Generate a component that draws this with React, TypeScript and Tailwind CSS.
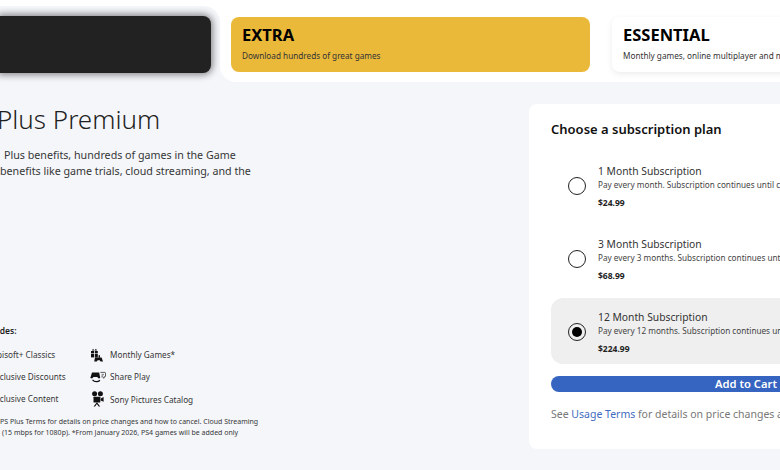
const font = { fontFamily: '"Noto Sans", sans-serif' };

function GamesIcon() {
  return (
    <svg width="14" height="14" viewBox="0 0 14 14" fill="#111">
      <rect x="1" y="3" width="3" height="2.4" />
      <rect x="4.8" y="3" width="3" height="2.4" />
      <rect x="1" y="6" width="3" height="3.4" />
      <rect x="4.8" y="6" width="3" height="3.4" />
      <path d="M2 2.6 3 .8l1.4 1.8L6 .8l1 1.8z" />
      <path d="M5 9.5h6.6l1.4 4h-2.4l-.8-1.3H7.6l-.8 1.3H4.2z" />
      <rect x="8.6" y="7.2" width="1.4" height="2.4" />
    </svg>
  );
}

function ShareIcon() {
  return (
    <svg width="16" height="12" viewBox="0 0 16 12" fill="none">
      <path d="M2 1.5h7.2l1 5.4-1.5.6-1.5-1.6H3.6L2 7.5.3 6.9z" fill="#111" />
      <path d="M2.5 8.8c2 2.4 5.6 2.4 7.4.4" stroke="#111" strokeWidth="1.3" />
      <path d="M10.4 1.4h4.4c.4 0 .7.3.7.7v3c0 .4-.3.7-.7.7h-.8v1.5l-1.6-1.5h-1" stroke="#333" strokeWidth=".8" />
      <path d="M11.6 3.4h2.4M11.6 4.7h1.6" stroke="#333" strokeWidth=".6" />
    </svg>
  );
}

function FilmIcon() {
  return (
    <svg width="13" height="16" viewBox="0 0 13 16" fill="#111">
      <circle cx="3.6" cy="2.8" r="2.5" />
      <circle cx="9.4" cy="2.8" r="2.5" />
      <rect x="2.5" y="5.8" width="6.8" height="5.6" rx=".5" />
      <path d="M9.6 7.4 12.6 6v4.8L9.6 9.6z" />
      <path d="M5.9 11.2 2.6 15.6h1.5L5.9 13l1.8 2.6h1.5L5.9 11.2z" />
    </svg>
  );
}

const plans = [
  { name: "1 Month Subscription", desc: "Pay every month. Subscription continues until cancelled.", price: "$24.99", selected: false },
  { name: "3 Month Subscription", desc: "Pay every 3 months. Subscription continues until cancelled.", price: "$68.99", selected: false },
  { name: "12 Month Subscription", desc: "Pay every 12 months. Subscription continues until cancelled.", price: "$224.99", selected: true },
];

export default function App() {
  return (
    <div className="w-[780px] h-[470px] overflow-hidden bg-[#f5f6fa] text-[#1f1f1f]" style={font}>
      <div className="flex h-[82px] w-[1000px]">
        <div className="w-[220px] shrink-0 bg-white pt-[6px]">
          <div className="h-full rounded-tr-[16px] bg-[#f5f6fa] pt-[10px] pr-[9px]">
            <div className="h-[57px] rounded-r-[8px] bg-[#222222] shadow-[0_0_7px_2px_rgba(0,0,0,0.45)]" />
          </div>
        </div>
        <div className="flex flex-1 gap-[22px] rounded-bl-[16px] bg-white pl-[11px] pt-[17px]">
          <div className="h-[55px] w-[359px] rounded-[8px] bg-[#ebb93a] pl-[11px] pt-[6px]">
            <div className="text-[16.5px] leading-[24px] font-bold text-black">EXTRA</div>
            <div className="mt-[3px] text-[8.2px] leading-[12px] text-[#333]">Download hundreds of great games</div>
          </div>
          <div className="h-[55px] w-[340px] rounded-[8px] bg-white pl-[11px] pt-[6px] shadow-[0_2px_6px_rgba(0,0,0,0.08)]">
            <div className="text-[16.5px] leading-[24px] font-bold text-black">ESSENTIAL</div>
            <div className="mt-[3px] text-[8.2px] leading-[12px] whitespace-nowrap text-[#333]">Monthly games, online multiplayer and more</div>
          </div>
        </div>
      </div>

      <div className="flex w-[1000px] pt-[22px]">
        <div className="w-[529px] shrink-0">
          <h1 className="-ml-[3px] -mt-[1px] text-[26px] leading-[32px] font-light text-[#1f1f1f]">Plus Premium</h1>
          <div className="mt-[12px] text-[10.7px] leading-[16px] whitespace-nowrap text-[#363636]">
            <p className="ml-[4px]">Plus benefits, hundreds of games in the Game</p>
            <p>benefits like game trials, cloud streaming, and the</p>
          </div>
          <div className="-ml-[21px] mt-[146px] text-[8.5px] leading-[12px] font-semibold text-[#1f1f1f]">Includes:</div>
          <div className="-ml-[9px] mt-[10px] grid w-[300px] grid-cols-[99px_1fr] gap-y-[7px] text-[8.2px] leading-[15px] text-[#363636]">
            <div>Ubisoft+ Classics</div>
            <div className="flex items-center">
              <div className="flex w-[20px] justify-center pr-[6px]"><GamesIcon /></div>
              <span>Monthly Games*</span>
            </div>
            <div>Exclusive Discounts</div>
            <div className="flex items-center">
              <div className="flex w-[20px] justify-center pr-[4px]"><ShareIcon /></div>
              <span>Share Play</span>
            </div>
            <div>Exclusive Content</div>
            <div className="flex items-center">
              <div className="flex w-[20px] justify-center pr-[6px]"><FilmIcon /></div>
              <span>Sony Pictures Catalog</span>
            </div>
          </div>
          <div className="mt-[9px] text-[7px] leading-[11px] whitespace-nowrap text-[#363636]">
            <p>PS Plus Terms for details on price changes and how to cancel. Cloud Streaming</p>
            <p className="ml-[2px]">(15 mbps for 1080p). *From January 2026, PS4 games will be added only</p>
          </div>
        </div>

        <div className="h-[345px] w-[434px] shrink-0 rounded-[8px] bg-white px-[22px] pt-[16px]">
          <h2 className="text-[13px] leading-[18px] font-semibold text-[#111]">Choose a subscription plan</h2>
          <div className="mt-[14px] flex flex-col gap-[7px]">
            {plans.map((plan) => (
              <div
                key={plan.name}
                className={`flex h-[66px] items-center rounded-[12px] pl-[17px] ${plan.selected ? "bg-[#efefef]" : ""}`}
              >
                <div className="mt-[2px] flex h-[18px] w-[18px] shrink-0 items-center justify-center rounded-full border-[1.5px] border-[#222]">
                  {plan.selected && <div className="h-[10px] w-[10px] rounded-full bg-black" />}
                </div>
                <div className="ml-[12px] mt-[2px] whitespace-nowrap">
                  <div className="text-[10.3px] leading-[16px] text-[#333]">{plan.name}</div>
                  <div className="text-[8.2px] leading-[12px] text-[#444]">{plan.desc}</div>
                  <div className="mt-[6px] text-[8.5px] leading-[12px] font-bold text-[#222]">{plan.price}</div>
                </div>
              </div>
            ))}
          </div>
          <button className="mt-[12px] h-[16px] w-full rounded-full bg-[#3565c0] text-[11.2px] leading-[16px] font-semibold text-white">
            Add to Cart
          </button>
          <p className="mt-[12px] text-[10.5px] leading-[16px] whitespace-nowrap text-[#777]">
            See <span className="text-[#3f6cc0]">Usage Terms</span> for details on price changes and how to cancel.
          </p>
        </div>
      </div>
    </div>
  );
}
